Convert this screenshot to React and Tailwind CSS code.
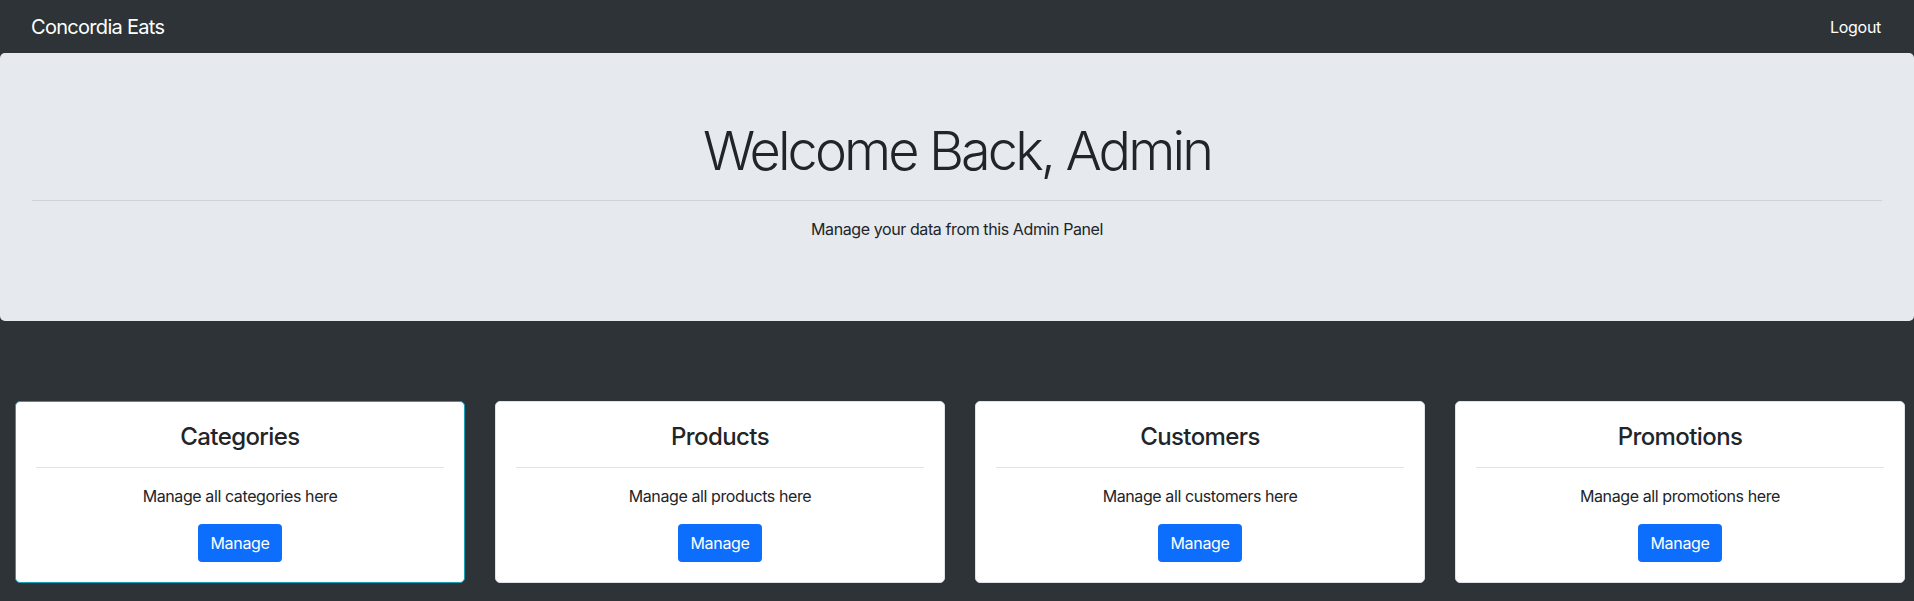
const sections = [
  { title: 'Categories', text: 'Manage all categories here', active: true },
  { title: 'Products', text: 'Manage all products here' },
  { title: 'Customers', text: 'Manage all customers here' },
  { title: 'Promotions', text: 'Manage all promotions here' },
];

function SectionCard({ title, text, active }) {
  return (
    <div
      className={`w-[450px] shrink-0 rounded-[5px] bg-white border text-center px-5 py-5 ${
        active ? 'border-[#17a2b8]' : 'border-[#dee2e6]'
      }`}
    >
      <h3 className="text-[24px] leading-[29px] font-medium text-[#212529] tracking-[-0.6px]">{title}</h3>
      <hr className="my-4 border-t border-[#e3e3e3]" />
      <p className="text-base leading-6 text-[#212529] mb-4 tracking-[-0.4px]">{text}</p>
      <button className="h-[38px] px-3 rounded-[4px] bg-[#0d6efd] text-white text-base leading-6 tracking-[-0.3px]">
        Manage
      </button>
    </div>
  );
}

export default function App() {
  return (
    <div
      className="min-h-[601px] bg-[#2e3338]"
      style={{ fontFamily: 'Inter, "Helvetica Neue", "Liberation Sans", sans-serif' }}
    >
      <nav className="h-[53px] flex items-center justify-between pl-[31px] pr-[33px]">
        <a href="#" className="text-white text-[20px] leading-none tracking-[-0.7px]">
          Concordia Eats
        </a>
        <a href="#" className="text-white text-base leading-none tracking-[-0.3px]">
          Logout
        </a>
      </nav>

      <div className="bg-[#e6e9ed] rounded-[5px] px-8 pt-16 pb-16 text-center">
        <h1 className="text-[54px] leading-[67px] font-light text-[#212529] tracking-[-2.9px]">
          Welcome Back, Admin
        </h1>
        <hr className="mt-4 mb-4 border-t border-[#cfd2d6]" />
        <p className="text-base leading-6 text-[#212529] mb-4 tracking-[-0.4px]">
          Manage your data from this Admin Panel
        </p>
      </div>

      <div className="flex gap-[30px] pl-[15px] pt-20 pb-[19px]">
        {sections.map((s) => (
          <SectionCard key={s.title} {...s} />
        ))}
      </div>
    </div>
  );
}
